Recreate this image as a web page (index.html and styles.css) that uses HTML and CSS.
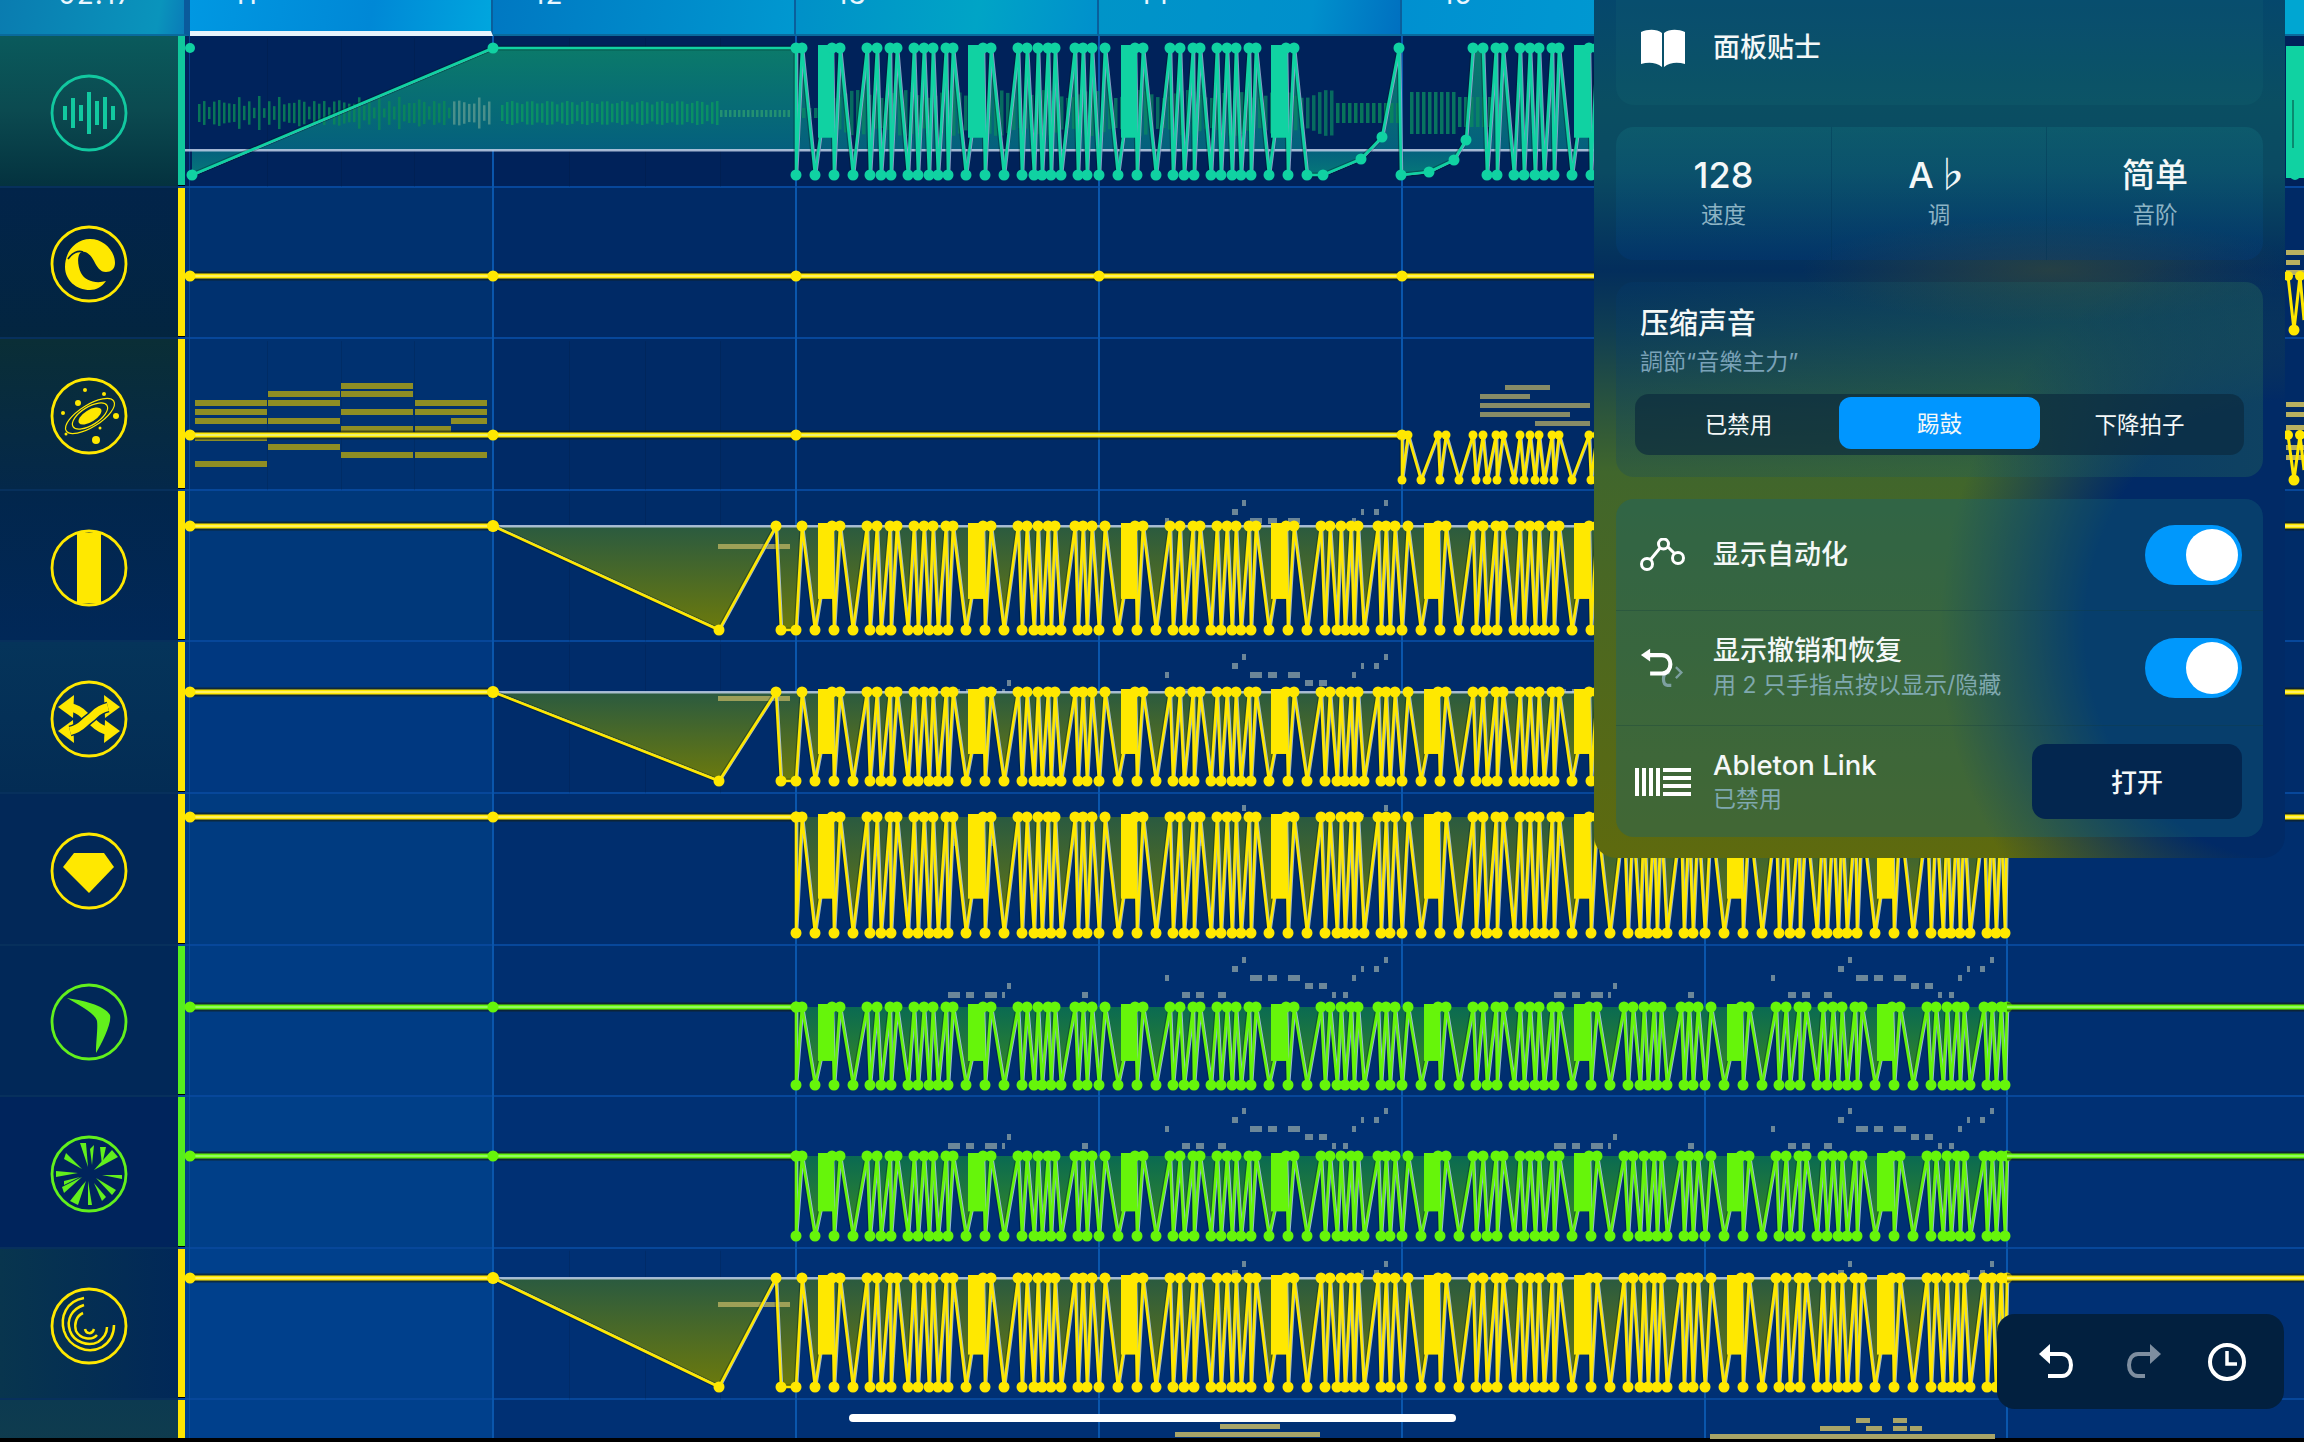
FILE: index.html
```html
<!DOCTYPE html>
<html lang="zh">
<head>
<meta charset="utf-8">
<title>Timeline</title>
<link rel="stylesheet" href="styles.css">
</head>
<body>
<div class="app">
  <header class="ruler">
    <div class="ruler-time"><span>02:17</span></div>
    <div class="ruler-bar bar-sel"><span>11</span></div>
    <div class="ruler-bar bar-b"><span>12</span></div>
    <div class="ruler-bar bar-c"><span>13</span></div>
    <div class="ruler-bar bar-d"><span>14</span></div>
    <div class="ruler-bar bar-e"><span>15</span></div>
    <div class="ruler-bar bar-f"><span>16</span></div>
    <div class="ruler-bar bar-g"><span>17</span></div>
  </header>

  <aside class="sidebar">
    <div class="side-row s1 c-teal">
      <svg class="icon" viewBox="0 0 78 78"><circle class="ring" cx="39" cy="39" r="37"/><g class="wave"><path d="M15 32v14M23 24v30M31 31v16M39 18v42M47 27v24M55 23v32M63 32v14"/></g></svg>
    </div>
    <div class="side-row s2 c-yellow">
      <svg class="icon" viewBox="0 0 78 78"><circle class="ring" cx="39" cy="39" r="37"/><path class="solid" d="M15 42C15 26 26 14 40 14C54 14 65 26 65 38C65 44 61 47 56 47C50 47 47 42 44 36C41 30 36 26 32 27C27 28 27 40 31 48C35 56 46 59 56 56C52 62 46 65 40 65C26 65 15 55 15 42Z"/><path class="cut" d="M18 34C22 28 28 25 33 27"/></svg>
    </div>
    <div class="side-row s3 c-yellow">
      <svg class="icon" viewBox="0 0 78 78"><circle class="ring" cx="39" cy="39" r="37"/><g class="solid"><circle cx="35" cy="13" r="2"/><circle cx="54" cy="17" r="2"/><circle cx="28" cy="26" r="3"/><circle cx="13" cy="36" r="2"/><circle cx="66" cy="39" r="3"/><circle cx="16" cy="57" r="1.5"/><circle cx="50" cy="51" r="1.5"/><circle cx="46" cy="63" r="4"/><ellipse cx="40" cy="39" rx="13" ry="6" transform="rotate(-32 40 39)"/></g><g class="thin"><ellipse cx="40" cy="39" rx="20" ry="9" transform="rotate(-32 40 39)"/><ellipse cx="40" cy="39" rx="28" ry="11" transform="rotate(-32 40 39)"/></g></svg>
    </div>
    <div class="side-row s4 c-yellow">
      <svg class="icon" viewBox="0 0 78 78"><circle class="ring" cx="39" cy="39" r="37"/><path class="solid" d="M27 4H51V74H27Z"/></svg>
    </div>
    <div class="side-row s5 c-yellow">
      <svg class="icon" viewBox="0 0 78 78"><circle class="ring" cx="39" cy="39" r="37"/><g class="solid"><path d="M8 27L24 15L23 38Z"/><path d="M70 27L54 15L55 38Z"/><path d="M8 51L24 63L23 40Z"/><path d="M70 51L54 63L55 40Z"/></g><path class="cross" d="M20 27C32 30 32 34 39 39S46 48 58 51"/><path class="cross-cut" d="M58 27C46 30 46 34 39 39S32 48 20 51"/><path class="cross" d="M58 27C46 30 46 34 39 39S32 48 20 51"/></svg>
    </div>
    <div class="side-row s6 c-yellow">
      <svg class="icon" viewBox="0 0 78 78"><circle class="ring" cx="39" cy="39" r="37"/><path class="solid" d="M24 21H54L64 35L39 61L13 35Z"/></svg>
    </div>
    <div class="side-row s7 c-green">
      <svg class="icon" viewBox="0 0 78 78"><circle class="ring" cx="39" cy="39" r="37"/><path class="solid" d="M17 15C30 17 55 22 60 32C62 40 52 60 46 70C46 58 48 45 47 38C45 30 30 23 17 15Z"/></svg>
    </div>
    <div class="side-row s8 c-green">
      <svg class="icon" viewBox="0 0 78 78"><circle class="ring" cx="39" cy="39" r="37"/><g class="solid"><path d="M30 8L36 8L38 32Z"/><path d="M56 12L52 30L50 12Z"/><path d="M68 22L44 35L62 15Z"/><path d="M72 40L52 40L72 44Z"/><path d="M62 60L46 43L66 55Z"/><path d="M42 70L38 46L38 70Z"/><path d="M28 70L20 66L36 46Z"/><path d="M12 52L32 42L14 58Z"/><path d="M6 36L28 38L6 42Z"/><path d="M16 18L32 34L14 24Z"/><path d="M40 14L42 30L44 10Z"/><path d="M24 62L34 48L28 64Z"/><path d="M52 66L44 48L56 62Z"/><path d="M14 46L30 42L14 50Z"/></g></svg>
    </div>
    <div class="side-row s9 c-yellow">
      <svg class="icon" viewBox="0 0 78 78"><circle class="ring" cx="39" cy="39" r="37"/><g class="arcs"><path d="M34 11C16 14 10 30 14 44C19 60 38 68 52 60C60 55 64 48 64 38"/><path d="M34 18C22 22 16 32 20 44C24 55 38 60 48 55C54 51 57 46 57 40"/><path d="M33 26C26 29 24 37 26 44C30 52 42 54 47 48"/><path d="M35 42C36 47 42 48 44 42"/></g></svg>
    </div>
    <div class="side-row s10"></div>
  </aside>

  <main class="timeline">
    <div class="track t1"><i class="strip st-teal"></i><div class="lane"></div></div>
    <div class="track t2"><i class="strip st-yellow"></i><div class="lane"></div></div>
    <div class="track t3"><i class="strip st-yellow"></i><div class="lane"></div></div>
    <div class="track t4"><i class="strip st-yellow"></i><div class="lane"></div></div>
    <div class="track t5"><i class="strip st-yellow"></i><div class="lane"></div></div>
    <div class="track t6"><i class="strip st-yellow"></i><div class="lane"></div></div>
    <div class="track t7"><i class="strip st-green"></i><div class="lane"></div></div>
    <div class="track t8"><i class="strip st-green"></i><div class="lane"></div></div>
    <div class="track t9"><i class="strip st-yellow"></i><div class="lane"></div></div>
    <div class="track t10"><i class="strip st-yellow"></i><div class="lane"></div></div>
  </main>

  <svg id="auto" class="automation" viewBox="0 0 2304 1442" width="2304" height="1442" aria-hidden="true"></svg>

  <section class="panel">
    <div class="card tips">
      <svg class="p-icon" width="46" height="38" viewBox="0 0 46 38"><path fill="#fff" d="M1 3C8 0 17 0 22 4V38C16 33 8 33 1 35Z"/><path fill="#fff" d="M45 3C38 0 29 0 24 4V38C30 33 38 33 45 35Z"/></svg>
      <span class="title">面板贴士</span>
    </div>
    <div class="card stats">
      <div class="stat"><span class="val">128</span><span class="lab">速度</span></div>
      <div class="stat"><span class="val val-key">A♭</span><span class="lab">调</span></div>
      <div class="stat"><span class="val val-cjk">简单</span><span class="lab">音阶</span></div>
    </div>
    <div class="card compress">
      <h2>压缩声音</h2>
      <p>調節“音樂主力”</p>
      <div class="seg">
        <span class="seg-l">已禁用</span>
        <span class="on">踢鼓</span>
        <span class="seg-r">下降拍子</span>
      </div>
    </div>
    <div class="card options">
      <div class="opt">
        <svg class="p-icon" width="46" height="34" viewBox="0 0 46 34"><g fill="none" stroke="#fff" stroke-width="3"><path d="M11 21L20 10M28 9L34 15"/><circle cx="7" cy="26" r="5.5"/><circle cx="23.500" cy="6" r="5"/><circle cx="38" cy="20" r="5.500"/></g></svg>
        <div class="txt"><span class="title">显示自动化</span></div>
        <div class="toggle"><i></i></div>
      </div>
      <div class="opt">
        <svg class="p-icon" width="50" height="44" viewBox="0 0 50 44"><g fill="none" stroke-width="3.500"><path stroke="#7da0a0" d="M32 27H30C24 28 24 40 30 41H34"/><path stroke="#7da0a0" d="M39 21L45 27L39 33" stroke-width="2.500"/><path stroke="#fff" stroke-width="4.500" d="M6 8H24C36 8 36 28 24 28H11"/></g><path fill="#fff" d="M1 8L11 1V15Z"/></svg>
        <div class="txt"><span class="title">显示撤销和恢复</span><span class="sub">用 2 只手指点按以显示/隐藏</span></div>
        <div class="toggle"><i></i></div>
      </div>
      <div class="opt">
        <svg class="p-icon abl" width="56" height="28" viewBox="0 0 56 28"><path fill="#fff" d="M0 0H4V28H0ZM7 0H11V28H7ZM14 0H18V28H14ZM21 0H25V28H21ZM28 0H56V4H28ZM28 8H56V12H28ZM28 16H56V20H28ZM28 24H56V28H28Z"/></svg>
        <div class="txt"><span class="title abl-title">Ableton Link</span><span class="sub">已禁用</span></div>
        <div class="open-btn">打开</div>
      </div>
    </div>
  </section>

  <div class="tools">
    <svg width="44" height="40" viewBox="0 0 44 40"><g fill="none" stroke="#fff" stroke-width="4"><path d="M14 12H27C39 12 39 34 27 34H13"/></g><path fill="#fff" d="M4 12L15 2V22Z"/></svg>
    <svg width="44" height="40" viewBox="0 0 44 40"><g fill="none" stroke="#7e8ea0" stroke-width="4"><path d="M30 12H17C5 12 5 34 17 34H24"/></g><path fill="#7e8ea0" d="M40 12L29 2V22Z"/></svg>
    <svg width="40" height="40" viewBox="0 0 40 40"><g fill="none" stroke="#fff" stroke-width="4"><circle cx="20" cy="20" r="17"/><path d="M20 9V22H30" stroke-width="3.500"/></g></svg>
  </div>

  <div class="home"></div>
</div>
<script src="app.js"></script>
</body>
</html>
```
FILE: styles.css
```css
* { box-sizing: border-box; }
html, body { margin: 0; padding: 0; background: #000; }
body { font-family: Inter, "Noto Sans CJK SC", sans-serif; color: #f4f8f8; }

.app {
  position: relative;
  width: 2304px;
  height: 1442px;
  overflow: hidden;
  display: grid;
  grid-template-columns: 178px 1fr;
  grid-template-rows: 36px 1402px 4px;
  background: #000;
}

/* ruler */
.ruler { grid-column: 1 / 3; display: flex; height: 36px; background: #0a8dc6; }
.ruler span { display: block; margin-top: -22px; font-size: 28px; line-height: 32px; color: #e8f6ff; letter-spacing: 1px; }
.ruler-time { width: 190px; padding-left: 58px; overflow: hidden; background: linear-gradient(100deg, #0a7cb0, #0a94bc 85%, #0a7cb8); border-right: 6px solid #0a5a9c; border-bottom: 2px solid #0a6a9c; }
.ruler-bar { width: 303px; height: 36px; padding-left: 40px; overflow: hidden; border-right: 2px solid #0a5f9c; border-bottom: 2px solid #0a6a9c; }
.bar-sel { padding-left: 43px; background: linear-gradient(100deg, #0098e2, #0088d6 60%, #00a6de); border-bottom: 5px solid #e8f4fc; }
.bar-b { background: linear-gradient(100deg, #0078c2, #0098d0); }
.bar-c { background: linear-gradient(100deg, #0090c8, #00a4c6 60%, #0090cc); }
.bar-d { background: linear-gradient(100deg, #0094c8, #0090cc 70%, #0070c0); }
.bar-e { background: linear-gradient(100deg, #0090d0, #009cd2); }
.bar-f { background: #00a0d2; }
.bar-g { flex: 1; background: #00a6d2; border-right: 0; }

/* sidebar */
.sidebar { display: grid; grid-auto-rows: 151.6px; overflow: hidden; }
.side-row { display: flex; align-items: center; justify-content: center; padding-top: 4px; border-bottom: 2px solid #07305c; }
.s1 { background: linear-gradient(180deg, #0a5a5c 0, #0b4a50 50%, #04323f 100%); }
.s2 { background: linear-gradient(180deg, #02244a, #032540); }
.s3 { background: linear-gradient(180deg, #0a2e36, #04284a); }
.s4 { background: linear-gradient(180deg, #02264c, #012858); }
.s5 { background: linear-gradient(180deg, #05345a, #032c54); }
.s6 { background: #022858; }
.s7 { background: #012858; }
.s8 { background: #00245c; }
.s9 { background: linear-gradient(90deg, #08354e, #012858); }
.s10 { background: linear-gradient(180deg, #0c3a50, #16404a); border-bottom: 0; }

.icon { display: block; width: 78px; height: 78px; overflow: hidden; }
.c-teal { color: #12c8a0; }
.c-yellow { color: #ffe800; }
.c-green { color: #62f01c; }
.ring { fill: none; stroke: currentColor; stroke-width: 2.800; }
.solid { fill: currentColor; }
.cut { fill: none; stroke: #032540; stroke-width: 1.600; }
.wave { stroke: currentColor; stroke-width: 4; fill: none; }
.thin { stroke: currentColor; stroke-width: 1.200; fill: none; }
.cross { stroke: currentColor; stroke-width: 8; fill: none; }
.cross-cut { stroke: #032c54; stroke-width: 11; fill: none; }
.arcs { stroke: currentColor; stroke-width: 2.500; fill: none; }

/* timeline */
.timeline { display: grid; grid-auto-rows: 151.6px; overflow: hidden; }
.track { display: grid; grid-template-columns: 7px 1fr; border-bottom: 2px solid #07479a; }
.strip { display: block; margin-bottom: 1px; }
.st-teal { background: #10c89c; }
.st-yellow { background: #ffe600; }
.st-green { background: #55ee1e; }
.lane { background: linear-gradient(90deg, var(--c1) 0, var(--c1) 308px, var(--c2) 308px); }
.t1 { --c1: #00235c; --c2: #00225a; }
.t2 { --c1: #00316f; --c2: #002a66; }
.t3 { --c1: #003170; --c2: #002a66; }
.t4 { --c1: #00387a; --c2: #002c68; }
.t5 { --c1: #003880; --c2: #002c6a; }
.t6 { --c1: #003b80; --c2: #002e6e; }
.t7 { --c1: #003c84; --c2: #002f70; }
.t8 { --c1: #003f88; --c2: #003074; }
.t9 { --c1: #00408c; --c2: #003074; }
.t10 { --c1: #00408c; --c2: #003074; }

.automation { position: absolute; left: 0; top: 0; pointer-events: none; }

/* panel */
.panel {
  position: absolute;
  left: 1594px;
  top: -20px;
  width: 691px;
  height: 878px;
  padding: 0 22px;
  display: flex;
  flex-direction: column;
  gap: 22px;
  border-radius: 22px;
  background:
    radial-gradient(ellipse 50% 45% at 100% 74%, #012a66 0, #012a66 58%, rgba(1, 42, 102, 0) 100%),
    radial-gradient(ellipse 36% 6% at 66% 33%, rgba(80, 85, 40, .45), rgba(80, 85, 40, 0)),
    linear-gradient(180deg, #04466e 0, #0a4e62 14%, #0a4a62 22%, #032e5c 33%, #103e52 40%, #40662c 56%, #5e6a0e 100%);
}
.card { flex: none; border-radius: 18px; background: rgba(30, 120, 130, .14); }
.tips { height: 125px; padding: 49px 0 0 24px; display: flex; gap: 27px; align-items: flex-start; }
.p-icon { flex: none; display: block; }
.title { display: block; font-size: 27px; line-height: 38px; font-weight: 500; }

.stats { height: 133px; display: grid; grid-template-columns: 216px 215px 216px; background: linear-gradient(180deg, rgba(20, 120, 130, .3), rgba(0, 60, 130, .3)); }
.stat { display: flex; flex-direction: column; align-items: center; padding-top: 26px; border-right: 1px solid rgba(0, 50, 80, .35); }
.stat:last-child { border-right: 0; }
.val { height: 44px; font-size: 36px; line-height: 44px; font-weight: 500; }
.val-key { letter-spacing: 0; word-spacing: 0; }
.val-cjk { font-size: 33px; }
.lab { margin-top: 3px; font-size: 22.500px; line-height: 30px; color: #8db3c4; }

.compress { height: 195px; padding: 23px 19px 0 24px; background: linear-gradient(90deg, rgba(0, 60, 120, .2), rgba(40, 110, 90, .35)); }
.compress h2 { margin: 0; font-size: 29px; line-height: 38px; font-weight: 500; }
.compress p { margin: 3px 0 16px; font-size: 23px; line-height: 32px; color: #7aa2b8; }
.seg { margin-left: -5px; height: 61px; display: grid; grid-template-columns: repeat(3, 1fr); border-radius: 14px; background: rgba(10, 40, 60, .65); }
.seg span { display: flex; align-items: center; justify-content: center; padding-bottom: 3px; font-size: 22.500px; border-radius: 12px; }
.seg .seg-l { padding-left: 4px; }
.seg .seg-r { padding-right: 6px; }
.seg .on { margin: 3px 1px 6px; background: #0096ff; }

.options { height: 338px; background: rgba(20, 100, 120, .36); display: grid; grid-template-rows: 112px 115px 111px; }
.opt { display: flex; align-items: center; padding: 0 21px 0 24px; gap: 27px; border-bottom: 1px solid rgba(20, 60, 60, .3); }
.opt:last-child { border-bottom: 0; }
.abl { margin-left: -5px; margin-right: -5px; }
.opt .p-icon { width: 46px; }
.opt .abl { width: 56px; }
.txt { flex: 1; display: flex; flex-direction: column; }
.sub { font-size: 23px; line-height: 34px; color: #7fa8ae; }
.opt .title { line-height: 34px; }
.opt .abl-title { font-size: 27.500px; }
.toggle { flex: none; width: 97px; height: 60px; padding: 4px; display: flex; justify-content: flex-end; border-radius: 30px; background: #0098fc; }
.toggle i { display: block; width: 52px; height: 52px; border-radius: 50%; background: #fff; }
.open-btn { flex: none; width: 210px; height: 75px; display: flex; align-items: center; justify-content: center; padding-bottom: 3px; font-size: 26px; font-weight: 500; border-radius: 14px; background: #03264f; }

/* bottom tools */
.tools {
  position: absolute;
  left: 1997px;
  top: 1314px;
  width: 287px;
  height: 95px;
  display: flex;
  align-items: center;
  justify-content: center;
  gap: 42px;
  border-radius: 18px;
  background: #02203f;
}

.home { position: absolute; left: 849px; top: 1414px; width: 607px; height: 8px; border-radius: 4px; background: #fff; }
```
FILE: app.js
```js
(function () {
  var svg = document.getElementById('auto');
  var out = [];
  var BARS = [190, 493, 796, 1099, 1402, 1705, 2007];
  var BOT = [0, 19, 38, 57, 74, 85, 95, 112, 122, 133, 142, 152, 170, 189, 208, 226, 238, 246, 255, 265, 282, 291, 303];
  var FRAC = [0.3, 0.9, 0.3, 0.8, 0.6, 0.9, 0.35, 0.6, 0.5, 0.4, 0.8, 0.3, 0.9, 0.3, 0.8, 0.4, 0.5, 0.7, 0.4, 0.85, 0.5, 0.4];
  var BLOCKS = [22, 172];
  var COL = {
    teal: { line: '#10d2a2', grad: 'gt', hi: '#a0b8e8', core: '#10d2a2' },
    yellow: { line: '#ffe800', grad: 'gy', hi: '#c0d8f0', core: '#fff060' },
    green: { line: '#66f50a', grad: 'gg', hi: '#b8d8ff', core: '#92f860' }
  };

  function pts(a) { return a.map(function (p) { return p[0] + ',' + p[1]; }).join(' '); }
  function add(s) { out.push(s); }
  function rect(x, y, w, h, fill, op) {
    add('<rect x="' + x + '" y="' + y + '" width="' + w + '" height="' + h + '" fill="' + fill + '"' + (op ? ' opacity="' + op + '"' : '') + '/>');
  }
  function poly(a, stroke, w, op) {
    add('<polyline points="' + pts(a) + '" fill="none" stroke="' + stroke + '" stroke-width="' + w + '"' + (op ? ' opacity="' + op + '"' : '') + ' stroke-linejoin="round"/>');
  }
  function dot(x, y, r, c) { add('<circle cx="' + x + '" cy="' + y + '" r="' + r + '" fill="' + c + '"/>'); }
  function flat(x0, x1, y, c) {
    rect(x0, y - 4.5, x1 - x0, 9, '#141e10', 0.6);
    rect(x0, y - 2.5, x1 - x0, 5, c.line);
    rect(x0, y - 1, x1 - x0, 2, c.core);
  }

  function zig(x0, x1, top, bot) {
    var seq = [];
    var blocks = [];
    for (var s = 796; s < x1; s += 303) {
      for (var i = 0; i < BOT.length - 1; i++) {
        var bx = s + BOT[i];
        var tx = Math.round(bx + (BOT[i + 1] - BOT[i]) * FRAC[i]);
        if (bx >= x0 && bx <= x1) seq.push([bx, bot]);
        if (tx >= x0 && tx <= x1) seq.push([tx, top]);
      }
      BLOCKS.forEach(function (b) {
        if (s + b >= x0 && s + b + 16 <= x1) blocks.push(s + b);
      });
    }
    return { seq: seq, blocks: blocks };
  }

  function defs() {
    add('<defs>' +
      '<linearGradient id="gy" x1="0" y1="0" x2="0" y2="1"><stop offset="0" stop-color="#2a5a40"/><stop offset="1" stop-color="#6c7a0c"/></linearGradient>' +
      '<linearGradient id="gg" x1="0" y1="0" x2="0" y2="1"><stop offset="0" stop-color="#0a6a52"/><stop offset="1" stop-color="#3a8a20"/></linearGradient>' +
      '<linearGradient id="gt" gradientUnits="userSpaceOnUse" x1="0" y1="48" x2="0" y2="178"><stop offset="0" stop-color="#0b7a6a"/><stop offset=".78" stop-color="#04607e"/><stop offset="1" stop-color="#067a78"/></linearGradient>' +
      '</defs>');
  }

  function grid() {
    BARS.forEach(function (x, i) {
      rect(x - 1, 36, i === 0 ? 1 : 2, 1402, '#0a56ac', i === 0 ? 0.6 : 1);
    });
    [1, 3].forEach(function (r) {
      var y = 38 + (r - 1) * 151.6;
      [267, 341, 414, 569, 645, 720].forEach(function (x) { rect(x, y, 1, 149, '#00102c', 0.16); });
    });
    [4, 5, 9].forEach(function (r) {
      var y = 38 + (r - 1) * 151.6;
      [569, 645, 720].forEach(function (x) { rect(x, y, 1, 149, '#00102c', 0.16); });
    });
  }

  function drawRow(o) {
    var c = COL[o.color];
    var all = o.seq;
    if (o.base !== undefined) {
      var first = all[0], last = all[all.length - 1];
      var closed = [[first[0], o.base]].concat(all).concat([[last[0], o.base]]);
      add('<polygon points="' + pts(closed) + '" fill="url(#' + c.grad + ')"/>');
    }
    if (o.pre) o.pre();
    if (o.baseLine) rect(o.baseLine[0], o.base - 1, o.baseLine[1] - o.baseLine[0], 2.5, '#c0d0e8', 0.85);
    poly(all, '#00180c', 5, 0.3);
    poly(all.map(function (p) { return [p[0] + 1.4, p[1]]; }), c.hi, 1.8, 0.8);
    poly(all, c.line, 2.6);
    (o.blocks || []).forEach(function (x) {
      rect(x, o.top - 3, 16, (o.bot - o.top) * 0.73, c.line);
    });
    all.forEach(function (p) { dot(p[0], p[1], o.r || 5.5, c.line); });
  }

  var NOTES_A = [[152, 12, 35], [170, 8, 35], [189, 12, 35], [206, 3, 35], [211, 4, 26], [286, 6, 35]];
  var NOTES_B = [[66, 4, 18], [83, 8, 35], [97, 8, 35], [119, 8, 35], [133, 6, 9], [143, 4, 0], [151, 12, 18], [169, 9, 18], [189, 12, 18], [206, 8, 26], [220, 8, 26], [233, 4, 35], [244, 5, 35], [253, 4, 18], [262, 3, 9], [275, 5, 9], [285, 4, 0]];
  function notes(base) {
    [[796, NOTES_A], [1099, NOTES_B], [1402, NOTES_A], [1705, NOTES_B]].forEach(function (b) {
      b[1].forEach(function (n) { rect(b[0] + n[0], base + n[2], n[1], 6, '#7f96a0', 0.85); });
    });
  }

  defs();
  grid();

  /* row 1 */
  (function () {
    var top = 48, bot = 175, base = 150;
    var z1 = zig(796, 1320, top, bot);
    var z2 = zig(1478, 1620, top, bot);
    var seq = [[192, bot], [493, top], [796, top]]
      .concat(z1.seq)
      .concat([[1323, bot], [1361, 159], [1382, 137], [1399, top], [1401, bot], [1429, 172], [1454, 160], [1466, 140], [1473, top]])
      .concat(z2.seq);
    drawRow({
      color: 'teal', seq: seq, top: top, bot: bot, base: base, baseLine: [185, 1600], blocks: z1.blocks.concat(z2.blocks),
      pre: function () {
        var i, h;
        for (i = 0; i < 59; i++) {
          h = 4 + 8 * Math.abs(Math.sin(i * 1.7)) + (i % 4 === 0 ? 5 : 0);
          rect(198 + i * 5, 113 - h, 2.5, h * 2, i > 50 ? '#5a9a90' : '#0a8a58', 0.8);
        }
        for (i = 0; i < 44; i++) {
          h = 8 + 4 * Math.abs(Math.sin(i * 2.3));
          rect(501 + i * 5, 113 - h, 2.5, h * 2, '#0a9a60', 0.8);
        }
        for (i = 0; i < 16; i++) rect(720 + i * 4.5, 110, 2.5, 7, '#2a9a70', 0.8);
        for (i = 0; i < 90; i++) {
          h = i < 4 ? 5 : 19 + 4 * Math.sin(i * 0.8);
          rect(796 + i * 6, 113 - h, 3.5, h * 2, '#0a8a62', 0.7);
        }
        for (i = 0; i < 11; i++) rect(1336 + i * 6, 103, 3.5, 20, '#0a8a5a', 0.8);
        for (i = 0; i < 14; i++) rect(1410 + i * 6, 92 + (i > 7 ? 5 : 0), 3.5, i > 7 ? 30 : 42, '#0a8a62', 0.8);
      }
    });
    dot(190, top, 5, COL.teal.line);
    rect(2286, 46, 18, 132, '#10d2a2');
    rect(2292, 100, 2, 48, '#0a8a70');
    dot(2295, 175, 5, '#10d2a2');
  })();

  /* row 2 */
  (function () {
    var y = 276, c = COL.yellow.line;
    flat(190, 1610, y, COL.yellow);
    [190, 493, 796, 1099, 1402].forEach(function (x) { dot(x, y, 5.5, c); });
    [[250, 18], [260, 14], [270, 18]].forEach(function (n) { rect(2286, n[0], n[1], 5, '#b8b060'); });
    poly([[2288, 276], [2294, 330], [2300, 276], [2304, 320]], c, 3);
    dot(2288, 276, 5, c); dot(2300, 276, 5, c); dot(2294, 330, 5.5, c);
  })();

  /* row 3 */
  (function () {
    var y = 435, bot = 480, c = COL.yellow.line;
    var xs = [[195, [403, 412, 421, 438, 464]], [268, [394, 403, 421, 447]], [341, [386, 394, 412, 429, 455]]];
    xs.forEach(function (b) { b[1].forEach(function (ny) { rect(b[0], ny - 3, 72, 6, '#8e8e24'); }); });
    [403, 412, 455].forEach(function (ny) { rect(415, ny - 3, 72, 6, '#8e8e24'); });
    rect(451, 418, 36, 6, '#8e8e24');
    rect(415, 426, 36, 6, '#8e8e24');
    [[1480, 394, 50], [1505, 385, 45], [1480, 403, 110], [1480, 412, 90], [1535, 421, 55]].forEach(function (n) {
      rect(n[0], n[1], n[2], 5, '#a8a468', 0.8);
    });
    flat(190, 1405, y, { line: '#ffe800', core: '#eef070' });
    [190, 493, 796, 1402].forEach(function (x) { dot(x, y, 5.5, c); });
    var z = zig(1402, 1600, y, bot);
    drawRow({ color: 'yellow', seq: [[1402, y]].concat(z.seq), top: y, bot: bot, r: 4.5 });
    [402, 412, 425, 445, 455].forEach(function (n) { rect(2286, n, 18, 5, '#b8b060'); });
    poly([[2288, 435], [2294, 480], [2300, 435], [2304, 470]], c, 3);
    dot(2288, 435, 5, c); dot(2300, 435, 5, c); dot(2294, 480, 5.5, c);
  })();

  function triRow(color, y, bot, notesBase, noteY) {
    var z = zig(796, 2005, y, bot);
    notes(notesBase);
    var head = [[493, y], [719, bot], [776, y], [781, bot]];
    var tail = [[2005, bot], [2007, y]];
    var seq = head.concat(z.seq).concat(tail);
    drawRow({
      color: color, seq: seq, top: y, bot: bot, base: y, baseLine: [493, 2007], blocks: z.blocks,
      pre: function () { rect(718, noteY, 72, 5, '#b8b060', 0.8); }
    });
    flat(190, 493, y, COL[color]);
    dot(190, y, 5.5, COL[color].line);
    dot(493, y, 6, COL[color].line);
    flat(2007, 2304, y, COL[color]);
  }
  function flatRow(color, y, bot, notesBase) {
    var z = zig(796, 2005, y, bot);
    notes(notesBase);
    var seq = [[796, y]].concat(z.seq).concat([[2005, bot], [2007, y]]);
    drawRow({ color: color, seq: seq, top: y, bot: bot, base: y, blocks: z.blocks });
    flat(190, 796, y, COL[color]);
    dot(190, y, 5.5, COL[color].line);
    dot(493, y, 5.5, COL[color].line);
    dot(796, y, 5.5, COL[color].line);
    flat(2007, 2304, y, COL[color]);
  }

  triRow('yellow', 526, 630, 500, 544);
  triRow('yellow', 692, 781, 654, 696);
  flatRow('yellow', 817, 933, 805);
  flatRow('green', 1007, 1085, 957);
  flatRow('green', 1156, 1236, 1108);
  triRow('yellow', 1278, 1387, 1261, 1302);

  /* row 10 notes */
  [[1175, 145, 1432], [1220, 60, 1424], [1710, 285, 1434], [1820, 30, 1426], [1866, 16, 1426], [1893, 14, 1426], [1856, 14, 1418], [1893, 14, 1418], [1910, 12, 1426]].forEach(function (n) {
    rect(n[0], n[2], n[1], 5, '#a8a468');
  });

  svg.innerHTML = out.join('');
})();
```
